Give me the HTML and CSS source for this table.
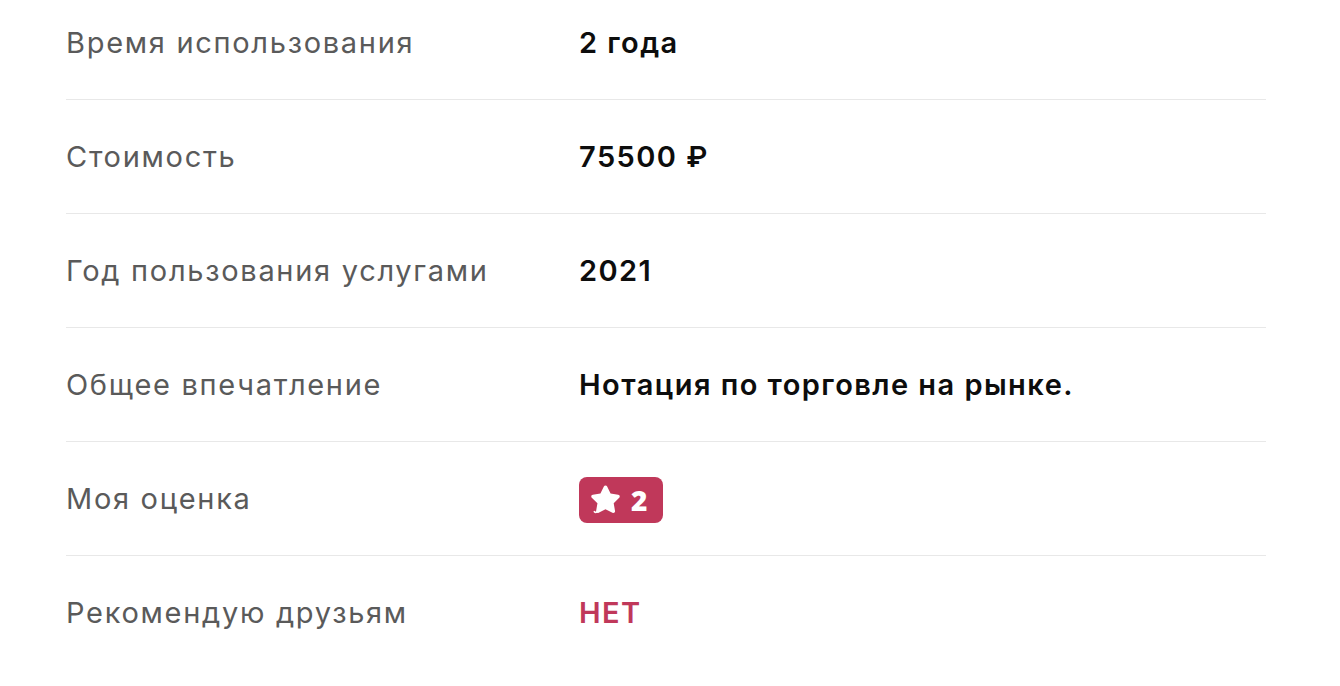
FILE: index.html
```html
<!DOCTYPE html>
<html lang="ru">
<head>
<meta charset="utf-8">
<link rel="stylesheet" href="styles.css">
</head>
<body>
<div class="list">
  <div class="row first"><div class="label">Время использования</div><div class="value">2 года</div></div>
  <div class="row"><div class="label">Стоимость</div><div class="value">75500 ₽</div></div>
  <div class="row"><div class="label">Год пользования услугами</div><div class="value">2021</div></div>
  <div class="row"><div class="label">Общее впечатление</div><div class="value">Нотация по торговле на рынке.</div></div>
  <div class="row"><div class="label">Моя оценка</div><div class="value"><span class="badge"><svg class="star" viewBox="1.6 2.4 20.8 19.2" width="31" height="29"><path d="M12 2.6c.5 0 .9.3 1.1.7l2.3 4.7 5.1.8c1 .1 1.4 1.3.7 2l-3.7 3.7.9 5.2c.2 1-.9 1.7-1.7 1.2L12 18.5l-4.6 2.4c-.9.5-1.9-.3-1.7-1.2l.9-5.2L2.8 10.8c-.7-.7-.3-1.9.7-2l5.1-.8 2.3-4.7c.2-.4.6-.7 1.1-.7z" fill="#fff"/><path d="M6.3 20.2c-.6.6-1.5.6-1.8 0" fill="none" stroke="#fff" stroke-width="1.1" stroke-linecap="round"/></svg><span class="num">2</span></span></div></div>
  <div class="row last"><div class="label">Рекомендую друзьям</div><div class="value no">НЕТ</div></div>
</div>
</body>
</html>
```
FILE: styles.css
```css
html, body { margin: 0; padding: 0; background: #fff; }
body { font-family: Inter, "Noto Sans", sans-serif; overflow: hidden; }
.list { margin: -14px 0 0 66px; width: 1200px; }
.row {
  display: flex;
  align-items: center;
  height: 113px;
  border-bottom: 1px solid #e8e8e8;
}
.row.last { border-bottom: none; }
.label {
  width: 513px;
  font-size: 29px;
  letter-spacing: 1.7px;
  color: #5a5a5a;
  font-weight: 400;
}
.value {
  font-size: 29px;
  font-weight: 600;
  letter-spacing: 1.45px;
  color: #0d0d0d;
}
.value.no { color: #c0385a; }
.badge {
  display: inline-flex;
  align-items: center;
  gap: 10px;
  height: 46px;
  padding: 0 16px 0 11px;
  background: #c0385a;
  border-radius: 8px;
  box-sizing: border-box;
  margin-top: 2px;
}
.star { display: block; }
.num { color: #fff; font-weight: 800; font-size: 28px; line-height: 1; letter-spacing: 0; font-family: "Open Sans", Inter, sans-serif; }
```
